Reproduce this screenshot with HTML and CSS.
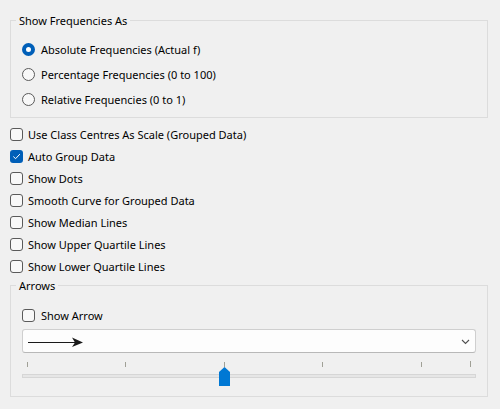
FILE: index.html
```html
<!DOCTYPE html>
<html>
<head>
<meta charset="utf-8">
<link rel="stylesheet" href="styles.css">
</head>
<body>
<div class="panel">
  <fieldset class="group g1">
    <legend>Show Frequencies As</legend>
    <div class="radios">
      <label class="opt"><span class="radio checked"></span>Absolute Frequencies (Actual f)</label>
      <label class="opt"><span class="radio"></span>Percentage Frequencies (0 to 100)</label>
      <label class="opt"><span class="radio"></span>Relative Frequencies (0 to 1)</label>
    </div>
  </fieldset>
  <div class="checks">
    <label class="chk"><span class="box"></span>Use Class Centres As Scale (Grouped Data)</label>
    <label class="chk"><span class="box checked"><svg width="13" height="13" viewBox="0 0 13 13"><path d="M3.6 6.8 L5.6 8.7 L9.6 4.4" fill="none" stroke="#fff" stroke-width="1" stroke-linecap="round" stroke-linejoin="round"/></svg></span>Auto Group Data</label>
    <label class="chk"><span class="box"></span>Show Dots</label>
    <label class="chk"><span class="box"></span>Smooth Curve for Grouped Data</label>
    <label class="chk"><span class="box"></span>Show Median Lines</label>
    <label class="chk"><span class="box"></span>Show Upper Quartile Lines</label>
    <label class="chk"><span class="box"></span>Show Lower Quartile Lines</label>
  </div>
  <fieldset class="group g2">
    <legend>Arrows</legend>
    <div class="arrows">
      <label class="chk"><span class="box"></span>Show Arrow</label>
      <div class="combo">
        <svg class="arrow" width="60" height="12" viewBox="0 0 60 12"><path d="M0 6.5 H52" stroke="#1a1a1a" stroke-width="1.1"/><path d="M44 1.5 L55 6.5 L44 11 L47 6.5 Z" fill="#1a1a1a"/></svg>
        <svg class="chev" width="9" height="6" viewBox="0 0 9 6"><path d="M1 1 L4.5 4.5 L8 1" fill="none" stroke="#505050" stroke-width="1.1"/></svg>
      </div>
      <div class="slider">
        <span class="tick" style="left:5px"></span>
        <span class="tick" style="left:103px"></span>
        <span class="tick" style="left:202px"></span>
        <span class="tick" style="left:300px"></span>
        <span class="tick" style="left:399px"></span>
        <span class="tick end" style="left:448px"></span>
        <div class="track"></div>
        <svg class="thumb" style="left:197px" width="11" height="19" viewBox="0 0 11 19"><path d="M5.5 0 L11 5 V19 H0 V5 Z" fill="#0078d4"/></svg>
      </div>
    </div>
  </fieldset>
</div>
</body>
</html>
```
FILE: styles.css
```css
html, body {
  margin: 0;
  padding: 0;
  background: #f0f0f0;
}
body {
  font-family: "Noto Sans", "Open Sans", sans-serif;
  font-size: 11px;
  color: #000;
}
.panel {
  padding: 12px 12px 0 10px;
}
.group {
  margin: 0;
  padding: 0 11px;
  border: 1px solid #dcdcdc;
  min-width: 0;
}
.group legend {
  margin-left: -6px;
  padding: 1px 3px 0;
  line-height: 15px;
  height: 16px;
  box-sizing: border-box;
}
.radios {
  padding: 9px 0 5px;
}
.opt, .chk {
  display: flex;
  align-items: center;
  white-space: nowrap;
}
.opt {
  height: 25px;
}
.radio {
  box-sizing: border-box;
  width: 13px;
  height: 13px;
  border-radius: 50%;
  border: 1px solid #5a5a5a;
  background: #f8f8f8;
  margin-right: 6px;
  flex: none;
}
.radio.checked {
  border: 4px solid #005fb8;
  background: #fff;
}
.checks {
  padding: 5px 0 0;
}
.chk {
  height: 22px;
}
.box {
  box-sizing: border-box;
  width: 13px;
  height: 13px;
  border-radius: 3px;
  border: 1px solid #5a5a5a;
  background: #f8f8f8;
  margin-right: 5px;
  flex: none;
  position: relative;
}
.box.checked {
  border: none;
  background: #005fb8;
}
.box svg {
  display: block;
}
.arrows {
  padding: 11px 0 10px;
}
.arrows .chk .box {
  margin-right: 6px;
}
.combo {
  box-sizing: border-box;
  margin-top: 3px;
  height: 24px;
  background: #fdfdfd;
  border: 1px solid #cfcfcf;
  border-bottom-color: #b8b8b8;
  border-radius: 3px;
  display: flex;
  align-items: center;
  justify-content: space-between;
  padding: 0 5px 0 5px;
}
.arrow {
  display: block;
  margin-top: 1px;
}
.chev {
  display: block;
  margin-top: 1px;
}
.slider {
  position: relative;
  height: 33px;
  padding-top: 21px;
  box-sizing: border-box;
}
.track {
  box-sizing: border-box;
  height: 4px;
  background: #e6e6e6;
  border: 1px solid #d6d6d6;
}
.tick {
  position: absolute;
  top: 9px;
  width: 1px;
  height: 5px;
  background: #a0a096;
}
.tick.end {
  top: 8px;
  height: 6px;
}
.thumb {
  position: absolute;
  top: 14px;
  display: block;
}
```
